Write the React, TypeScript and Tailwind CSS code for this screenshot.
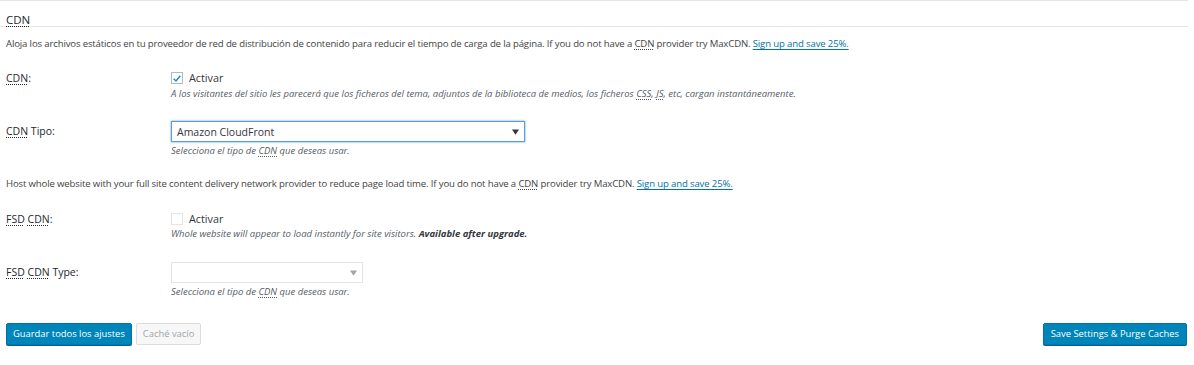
import React from "react";

function Abbr({ children }: { children: React.ReactNode }) {
  return (
    <span className="underline decoration-dotted decoration-1 underline-offset-2">
      {children}
    </span>
  );
}

function Link({ children }: { children: React.ReactNode }) {
  return <a className="text-[#0073aa] underline underline-offset-2">{children}</a>;
}

function Row({
  label,
  children,
  className = "",
}: {
  label: React.ReactNode;
  children: React.ReactNode;
  className?: string;
}) {
  return (
    <div className={`flex ${className}`}>
      <div className="w-[165px] shrink-0 text-[10.5px] leading-[14px] text-[#23282d]">{label}</div>
      <div className="flex-1">{children}</div>
    </div>
  );
}

function Check({ checked, disabled }: { checked?: boolean; disabled?: boolean }) {
  return (
    <span
      className={`flex h-[12px] w-[12px] items-center justify-center border ${
        disabled ? "border-[#e5e5e5] bg-white" : "border-[#b4b9be] bg-white"
      }`}
    >
      {checked && (
        <svg viewBox="0 0 12 12" className="h-[11px] w-[11px]">
          <path d="M2 6.2 L4.8 9 L10 2.6" fill="none" stroke="#1e8cbe" strokeWidth="1.8" />
        </svg>
      )}
    </span>
  );
}

function Select({
  value,
  width,
  focused,
  disabled,
}: {
  value?: string;
  width: string;
  focused?: boolean;
  disabled?: boolean;
}) {
  return (
    <div
      className={`flex h-[21px] items-center justify-between px-[5px] ${width} ${
        focused
          ? "border border-[#5b9dd9] shadow-[0_0_2px_rgba(30,140,190,0.8)]"
          : "border border-[#e2e4e7]"
      }`}
    >
      <span className="text-[10.5px] leading-[14px] text-[#32373c]">{value}</span>
      <svg viewBox="0 0 8 6" className="h-[6px] w-[7px]">
        <path d="M0 0 H8 L4 6 Z" fill={disabled ? "#a0a5aa" : "#32373c"} />
      </svg>
    </div>
  );
}

export default function App() {
  return (
    <div
      className="min-h-[365px] w-[1194px] bg-white text-[#444]"
      style={{ fontFamily: '"Open Sans", "Noto Sans", sans-serif' }}
    >
      {/* Encabezado */}
      <div className="mr-[6px] h-[27px] border-y border-[#e5e5e5] pl-[6px] pt-[5px]">
        <span className="text-[11.5px] leading-[14px] text-[#23282d]">
          <Abbr>CDN</Abbr>
        </span>
      </div>

      <div className="px-[6px]">
        <p className="mt-[10px] text-[9.6px] leading-[14px] tracking-[-0.15px]">
          Aloja los archivos estáticos en tu proveedor de red de distribución de contenido para
          reducir el tiempo de carga de la página. If you do not have a <Abbr>CDN</Abbr> provider
          try MaxCDN. <Link>Sign up and save 25%.</Link>
        </p>

        <Row label={<><Abbr>CDN</Abbr>:</>} className="mt-[20px]">
          <div className="flex h-[14px] items-center gap-[6px]">
            <Check checked />
            <span className="text-[10.8px] text-[#32373c]">Activar</span>
          </div>
          <p className="mt-[2px] text-[9.5px] leading-[13px] italic text-[#555d66]">
            A los visitantes del sitio les parecerá que los ficheros del tema, adjuntos de la
            biblioteca de medios, los ficheros <Abbr>CSS</Abbr>, <Abbr>JS</Abbr>, etc, cargan
            instantáneamente.
          </p>
        </Row>

        <Row
          label={<span className="mt-[3px] block"><Abbr>CDN</Abbr> Tipo:</span>}
          className="mt-[21px]"
        >
          <Select value="Amazon CloudFront" width="w-[354px]" focused />
          <p className="mt-[2px] text-[9.5px] leading-[13px] italic text-[#555d66]">
            Selecciona el tipo de <Abbr>CDN</Abbr> que deseas usar.
          </p>
        </Row>

        <p className="mt-[20px] text-[9.6px] leading-[14px] tracking-[-0.15px]">
          Host whole website with your full site content delivery network provider to reduce page
          load time. If you do not have a <Abbr>CDN</Abbr> provider try MaxCDN.{" "}
          <Link>Sign up and save 25%.</Link>
        </p>

        <Row
          label={<><Abbr>FSD</Abbr> <Abbr>CDN</Abbr>:</>}
          className="mt-[21px]"
        >
          <div className="flex h-[14px] items-center gap-[6px]">
            <Check disabled />
            <span className="text-[10.8px] text-[#32373c]">Activar</span>
          </div>
          <p className="mt-[1px] text-[9.5px] leading-[13px] italic text-[#555d66]">
            Whole website will appear to load instantly for site visitors.{" "}
            <b className="text-[#32373c]">Available after upgrade.</b>
          </p>
        </Row>

        <Row
          label={<span className="mt-[3px] block"><Abbr>FSD</Abbr> <Abbr>CDN</Abbr> Type:</span>}
          className="mt-[22px]"
        >
          <Select width="w-[192px]" disabled />
          <p className="mt-[2px] text-[9.5px] leading-[13px] italic text-[#555d66]">
            Selecciona el tipo de <Abbr>CDN</Abbr> que deseas usar.
          </p>
        </Row>

        {/* Botones */}
        <div className="mt-[25px] flex items-center justify-between pr-[1px]">
          <div className="flex gap-[4px]">
            <button className="h-[22px] rounded-[2px] border border-[#0073aa] bg-[#0085ba] px-[6px] text-[9.4px] text-white shadow-[0_1px_0_#006799]">
              Guardar todos los ajustes
            </button>
            <button className="h-[22px] rounded-[2px] border border-[#ddd] bg-[#f7f7f7] px-[6px] text-[9.4px] text-[#a0a5aa]">
              Caché vacío
            </button>
          </div>
          <button className="h-[22px] rounded-[2px] border border-[#0073aa] bg-[#0085ba] px-[7px] text-[9.4px] text-white shadow-[0_1px_0_#006799]">
            Save Settings &amp; Purge Caches
          </button>
        </div>
      </div>
    </div>
  );
}
